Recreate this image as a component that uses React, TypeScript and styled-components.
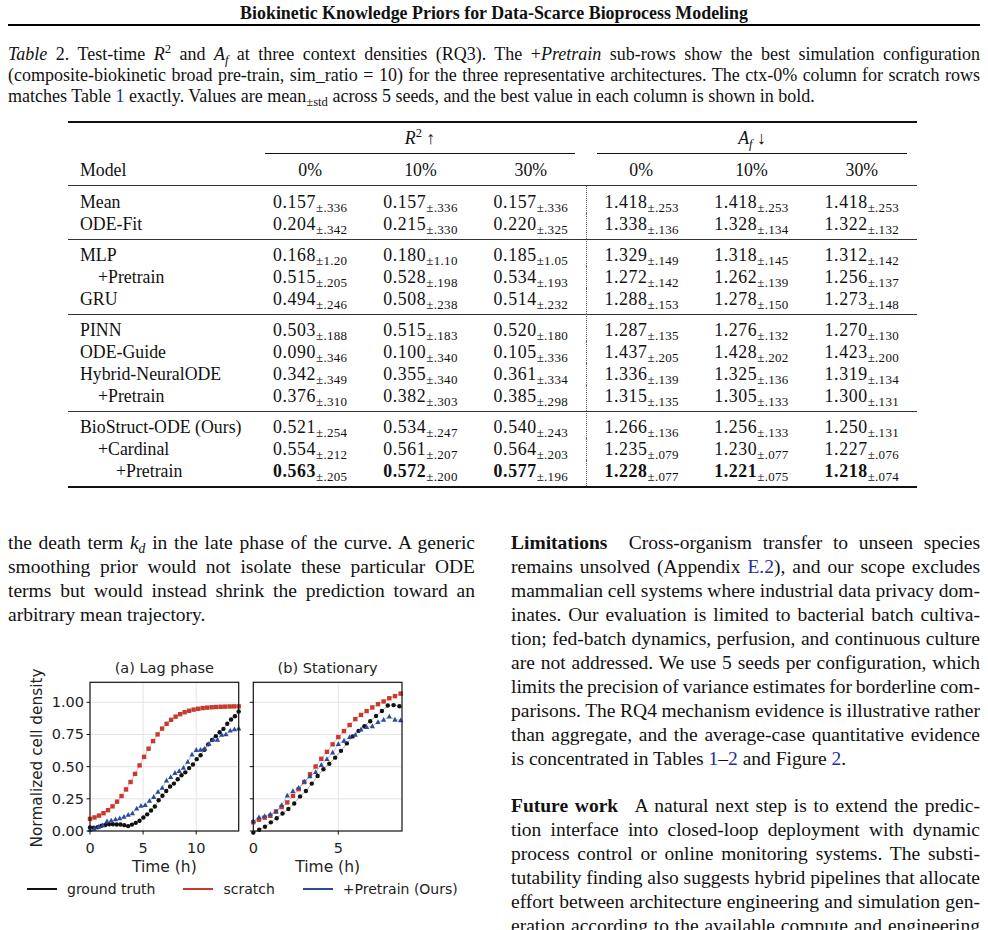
import React from "react";
import styled, { createGlobalStyle } from "styled-components";

const GlobalStyle = createGlobalStyle`
  html, body { margin: 0; padding: 0; background: #fff; }
  body { font-family: "Liberation Serif", "Times New Roman", serif; color: #111; }
  * { box-sizing: border-box; }
`;

const Page = styled.div`
  width: 988px;
  height: 930px;
  overflow: hidden;
  padding: 0 8px;
`;

const RunningHead = styled.header`
  height: 26px;
  padding-top: 3px;
  border-bottom: 2px solid #000;
  font-weight: bold;
  font-size: 17.9px;
  line-height: 20px;
  text-align: center;
`;

const Caption = styled.div`
  margin-top: 18px;
  font-size: 18px;
  line-height: 21px;
`;

const Line = styled.span<{ $last?: boolean }>`
  display: block;
  text-align: justify;
  text-align-last: ${(p) => (p.$last ? "left" : "justify")};
  word-spacing: ${(p) => (p.$last ? "0" : "-2px")};
  white-space: normal;
`;

const Label = styled.i``;
const MathI = styled.i`
  font-style: italic;
`;
const Sup = styled.sup`
  font-size: 0.7em;
  line-height: 0;
  vertical-align: 0.55em;
  font-style: normal;
`;
const Sub = styled.sub`
  font-size: 0.7em;
  line-height: 0;
  vertical-align: -0.3em;
`;
const Link = styled.span`
  color: #1f2f9a;
`;
const Bold = styled.b`
  font-weight: bold;
  margin-right: 0.55em;
`;

/* ---------------- Table ---------------- */

const Table = styled.table`
  margin: 14px 0 0 60px;
  width: 849px;
  border-collapse: separate;
  border-spacing: 0;
  font-size: 17.8px;
  line-height: 22px;
  border-top: 2px solid #111;
  border-bottom: 2px solid #111;
  table-layout: fixed;
`;

const GroupTh = styled.th`
  padding: 4px 0 0 0;
  font-weight: normal;
`;

const GroupHead = styled.div<{ $l: number; $r: number }>`
  margin: 0 ${(p) => p.$r}px 0 ${(p) => p.$l}px;
  padding-bottom: 4px;
  border-bottom: 1px solid #111;
  text-align: center;
  line-height: 22px;
`;

const HeadTh = styled.th<{ $left?: boolean }>`
  font-weight: normal;
  padding: 5px 0 4px ${(p) => (p.$left ? "12px" : "0")};
  text-align: ${(p) => (p.$left ? "left" : "center")};
  border-bottom: 1px solid #333;
`;

const Cell = styled.td<{ $first?: boolean; $lastRow?: boolean; $dotted?: boolean; $groupTop?: boolean }>`
  text-align: center;
  white-space: nowrap;
  padding: ${(p) => (p.$first ? (p.$groupTop ? "4px" : "5px") : "0")} 0 ${(p) => (p.$lastRow ? "4px" : "0")} 0;
  border-left: ${(p) => (p.$dotted ? "1px dotted #666" : "none")};
  border-top: ${(p) => (p.$groupTop ? "1px solid #333" : "none")};
`;

const NameCell = styled(Cell)<{ $indent: number }>`
  text-align: left;
  padding-left: ${(p) => 12 + p.$indent * 18}px;
`;

const Val = styled.span<{ $bold?: boolean }>`
  font-weight: ${(p) => (p.$bold ? 700 : 400)};
  letter-spacing: 0.6px;
`;
const Std = styled.span`
  font-size: 13px;
  vertical-align: -4px;
  line-height: 0;
  letter-spacing: 0.3px;
`;

type Row = { name: string; indent: number; bold?: boolean; v: [string, string][] };

const groups: Row[][] = [
  [
    { name: "Mean", indent: 0, v: [["0.157", ".336"], ["0.157", ".336"], ["0.157", ".336"], ["1.418", ".253"], ["1.418", ".253"], ["1.418", ".253"]] },
    { name: "ODE-Fit", indent: 0, v: [["0.204", ".342"], ["0.215", ".330"], ["0.220", ".325"], ["1.338", ".136"], ["1.328", ".134"], ["1.322", ".132"]] },
  ],
  [
    { name: "MLP", indent: 0, v: [["0.168", "1.20"], ["0.180", "1.10"], ["0.185", "1.05"], ["1.329", ".149"], ["1.318", ".145"], ["1.312", ".142"]] },
    { name: "+Pretrain", indent: 1, v: [["0.515", ".205"], ["0.528", ".198"], ["0.534", ".193"], ["1.272", ".142"], ["1.262", ".139"], ["1.256", ".137"]] },
    { name: "GRU", indent: 0, v: [["0.494", ".246"], ["0.508", ".238"], ["0.514", ".232"], ["1.288", ".153"], ["1.278", ".150"], ["1.273", ".148"]] },
  ],
  [
    { name: "PINN", indent: 0, v: [["0.503", ".188"], ["0.515", ".183"], ["0.520", ".180"], ["1.287", ".135"], ["1.276", ".132"], ["1.270", ".130"]] },
    { name: "ODE-Guide", indent: 0, v: [["0.090", ".346"], ["0.100", ".340"], ["0.105", ".336"], ["1.437", ".205"], ["1.428", ".202"], ["1.423", ".200"]] },
    { name: "Hybrid-NeuralODE", indent: 0, v: [["0.342", ".349"], ["0.355", ".340"], ["0.361", ".334"], ["1.336", ".139"], ["1.325", ".136"], ["1.319", ".134"]] },
    { name: "+Pretrain", indent: 1, v: [["0.376", ".310"], ["0.382", ".303"], ["0.385", ".298"], ["1.315", ".135"], ["1.305", ".133"], ["1.300", ".131"]] },
  ],
  [
    { name: "BioStruct-ODE (Ours)", indent: 0, v: [["0.521", ".254"], ["0.534", ".247"], ["0.540", ".243"], ["1.266", ".136"], ["1.256", ".133"], ["1.250", ".131"]] },
    { name: "+Cardinal", indent: 1, v: [["0.554", ".212"], ["0.561", ".207"], ["0.564", ".203"], ["1.235", ".079"], ["1.230", ".077"], ["1.227", ".076"]] },
    { name: "+Pretrain", indent: 2, bold: true, v: [["0.563", ".205"], ["0.572", ".200"], ["0.577", ".196"], ["1.228", ".077"], ["1.221", ".075"], ["1.218", ".074"]] },
  ],
];

function ResultsTable() {
  return (
    <Table>
      <colgroup>
        <col style={{ width: 187 }} />
        {[0, 1, 2, 3, 4, 5].map((i) => (
          <col key={i} />
        ))}
      </colgroup>
      <thead>
        <tr>
          <GroupTh />
          <GroupTh colSpan={3}>
            <GroupHead $l={10} $r={11}>
              <MathI>R</MathI>
              <Sup>2</Sup> ↑
            </GroupHead>
          </GroupTh>
          <GroupTh colSpan={3}>
            <GroupHead $l={11} $r={10}>
              <MathI>A</MathI>
              <Sub>
                <MathI>f</MathI>
              </Sub>{" "}
              ↓
            </GroupHead>
          </GroupTh>
        </tr>
        <tr>
          <HeadTh $left>Model</HeadTh>
          {["0%", "10%", "30%", "0%", "10%", "30%"].map((h, i) => (
            <HeadTh key={i}>{h}</HeadTh>
          ))}
        </tr>
      </thead>
      {groups.map((g, gi) => (
        <tbody key={gi}>
          {g.map((r, ri) => {
            const first = ri === 0;
            const lastRow = ri === g.length - 1;
            const gt = first && gi > 0;
            return (
              <tr key={ri}>
                <NameCell $indent={r.indent} $first={first} $lastRow={lastRow} $groupTop={gt}>
                  {r.name}
                </NameCell>
                {r.v.map(([m, s], ci) => (
                  <Cell key={ci} $first={first} $lastRow={lastRow} $groupTop={gt} $dotted={ci === 3}>
                    <Val $bold={r.bold}>{m}</Val>
                    <Std>±{s}</Std>
                  </Cell>
                ))}
              </tr>
            );
          })}
        </tbody>
      ))}
    </Table>
  );
}

/* ---------------- Body columns ---------------- */

const Columns = styled.div`
  margin-top: 43px;
  display: grid;
  grid-template-columns: 467px 469px;
  column-gap: 36px;
  align-items: start;
`;

const Column = styled.div`
  display: flex;
  flex-direction: column;
`;

const Para = styled.p<{ $gap?: number }>`
  margin: ${(p) => p.$gap ?? 0}px 0 0 0;
  font-size: 19.5px;
  line-height: 24px;
`;

/* ---------------- Figure ---------------- */

const FigureBox = styled.figure`
  margin: 23px 0 0 0;
  display: flex;
  flex-direction: column;
`;

const Legend = styled.div`
  display: flex;
  align-items: center;
  gap: 28px;
  padding-left: 19px;
  height: 18px;
  font-family: "DejaVu Sans", sans-serif;
  font-size: 14px;
  color: #222;
`;

const LegendItem = styled.div`
  display: flex;
  align-items: center;
  gap: 10px;
`;

const Swatch = styled.span<{ $c: string }>`
  display: inline-block;
  width: 30px;
  height: 2.5px;
  background: ${(p) => p.$c};
`;

const FigCaption = styled.div`
  margin-top: 31px;
  font-size: 18px;
  line-height: 21px;
  padding-left: 44px;
`;

type P = [number, number];
const interp = (k: P[], t: number) => {
  if (t <= k[0][0]) return k[0][1];
  for (let i = 1; i < k.length; i++) {
    if (t <= k[i][0]) {
      const [t0, v0] = k[i - 1];
      const [t1, v1] = k[i];
      return v0 + ((v1 - v0) * (t - t0)) / (t1 - t0);
    }
  }
  return k[k.length - 1][1];
};
const jit = (i: number, s: number) => {
  const x = Math.sin(i * 12.9898 + s * 78.233) * 43758.5453;
  return x - Math.floor(x) - 0.5;
};

const RED = "#c9392e";
const BLUE = "#2b4a9e";
const BLK = "#111";

const aBlack: P[] = [[0, 0.03], [0.5, 0.02], [1, 0.04], [1.5, 0.05], [2, 0.05], [2.5, 0.05], [3, 0.05], [3.5, 0.04], [4, 0.05], [4.5, 0.07], [5, 0.1], [5.5, 0.14], [6, 0.18], [6.5, 0.24], [7, 0.29], [7.5, 0.34], [8, 0.38], [8.5, 0.42], [9, 0.46], [9.5, 0.5], [10, 0.55], [10.5, 0.6], [11, 0.66], [11.5, 0.71], [12, 0.75], [12.5, 0.79], [13, 0.84], [13.5, 0.88], [14, 0.93]];
const aBlue: P[] = [[0, 0.02], [1, 0.04], [2, 0.08], [3, 0.1], [3.5, 0.12], [4, 0.14], [4.5, 0.17], [5, 0.2], [5.5, 0.22], [6, 0.26], [6.5, 0.3], [7, 0.36], [7.5, 0.41], [8, 0.45], [8.5, 0.47], [9, 0.52], [9.5, 0.59], [10, 0.62], [10.5, 0.63], [11, 0.66], [11.5, 0.7], [12, 0.72], [12.5, 0.75], [13, 0.77], [13.5, 0.8], [14, 0.79]];
const bRed: P[] = [[0, 0.07], [1, 0.12], [2, 0.22], [3, 0.38], [4, 0.56], [5, 0.73], [6, 0.87], [7, 0.96], [8, 1.03], [8.75, 1.07]];
const bBlack: P[] = [[0, -0.01], [0.5, 0.02], [1, 0.06], [2, 0.16], [3, 0.3], [4, 0.46], [5, 0.6], [6, 0.76], [7, 0.87], [7.5, 0.92], [8, 0.99], [8.3, 0.98], [8.75, 0.97]];
const bBlue: P[] = [[0, 0.09], [0.5, 0.13], [1, 0.12], [1.5, 0.18], [2, 0.27], [2.5, 0.31], [3, 0.37], [4, 0.5], [5, 0.67], [6, 0.76], [7, 0.81], [7.5, 0.85], [8, 0.88], [8.4, 0.85], [8.75, 0.87]];

const Y0 = 181;
const YS = 128.7;
const yOf = (v: number) => Y0 - v * YS;

type Series = { pts: P[]; color: string; kind: "sq" | "dot" | "tri" };

function Marker({ x, y, kind, color }: { x: number; y: number; kind: Series["kind"]; color: string }) {
  if (kind === "sq") return <rect x={x - 2.2} y={y - 2.2} width={4.4} height={4.4} fill={color} />;
  if (kind === "dot") return <circle cx={x} cy={y} r={2.2} fill={color} />;
  return <polygon points={`${x},${y - 2.9} ${x - 2.6},${y + 1.9} ${x + 2.6},${y + 1.9}`} fill={color} />;
}

function Panel({
  x0,
  x1,
  tmax,
  xticks,
  title,
  showY,
  series,
}: {
  x0: number;
  x1: number;
  tmax: number;
  xticks: number[];
  title: string;
  showY: boolean;
  series: Series[];
}) {
  const xOf = (t: number) => x0 + ((x1 - x0) * t) / tmax;
  const yt = [0, 0.25, 0.5, 0.75, 1];
  const top = 32.3;
  return (
    <g>
      {xticks.filter((t) => t > 0).map((t) => (
        <line key={"gx" + t} x1={xOf(t)} x2={xOf(t)} y1={top} y2={Y0} stroke="#e4e4e4" strokeWidth={1} />
      ))}
      {yt.filter((v) => v > 0).map((v) => (
        <line key={"gy" + v} x1={x0} x2={x1} y1={yOf(v)} y2={yOf(v)} stroke="#e4e4e4" strokeWidth={1} />
      ))}
      {series.map((s, si) => {
        const poly = s.pts.map(([t, v]) => `${xOf(t)},${yOf(v)}`).join(" ");
        return (
          <g key={si}>
            <polyline points={poly} fill="none" stroke={s.color} strokeOpacity={0.35} strokeWidth={1} />
            {s.pts.map(([t, v], i) => (
              <Marker key={i} x={xOf(t)} y={yOf(v)} kind={s.kind} color={s.color} />
            ))}
          </g>
        );
      })}
      <rect x={x0} y={top} width={x1 - x0} height={Y0 - top} fill="none" stroke="#111" strokeWidth={1.2} />
      {yt.map((v) => (
        <line key={"ty" + v} x1={x0 - 3.5} x2={x0} y1={yOf(v)} y2={yOf(v)} stroke="#111" strokeWidth={1} />
      ))}
      {xticks.map((t) => (
        <line key={"tx" + t} x1={xOf(t)} x2={xOf(t)} y1={Y0} y2={Y0 + 3.5} stroke="#111" strokeWidth={1} />
      ))}
      {showY &&
        yt.map((v) => (
          <text key={"ly" + v} x={x0 - 6} y={yOf(v) + 5} textAnchor="end" fontSize={14.5} fill="#222">
            {v.toFixed(2)}
          </text>
        ))}
      {xticks.map((t) => (
        <text key={"lx" + t} x={xOf(t)} y={203} textAnchor="middle" fontSize={14.5} fill="#222">
          {t}
        </text>
      ))}
      <text x={(x0 + x1) / 2} y={23} textAnchor="middle" fontSize={14.5} fill="#222">
        {title}
      </text>
      <text x={(x0 + x1) / 2} y={222} textAnchor="middle" fontSize={15.5} fill="#222">
        Time (h)
      </text>
    </g>
  );
}

function sample(k: P[], n: number, tmax: number, seed: number, amp: number): P[] {
  const out: P[] = [];
  for (let i = 0; i < n; i++) {
    const t = (tmax * i) / (n - 1);
    out.push([t, interp(k, t) + jit(i, seed) * amp]);
  }
  return out;
}

function GrowthFigure() {
  const aRedPts: P[] = [];
  for (let i = 0; i < 34; i++) {
    const t = (14 * i) / 33;
    aRedPts.push([t, 0.06 + 0.91 / (1 + Math.exp(-(t - 4.7) / 1.45))]);
  }
  const aSeries: Series[] = [
    { pts: sample(aBlack, 40, 14, 1, 0.008), color: BLK, kind: "dot" },
    { pts: aRedPts, color: RED, kind: "sq" },
    { pts: sample(aBlue, 36, 14, 2, 0.025), color: BLUE, kind: "tri" },
  ];
  const bSeries: Series[] = [
    { pts: sample(bBlack, 26, 8.6, 3, 0.01), color: BLK, kind: "dot" },
    { pts: sample(bRed, 27, 8.67, 4, 0.004), color: RED, kind: "sq" },
    { pts: sample(bBlue, 27, 8.67, 5, 0.03), color: BLUE, kind: "tri" },
  ];
  return (
    <FigureBox>
      <svg width={467} height={230} viewBox="0 0 467 230" style={{ display: "block" }} fontFamily="DejaVu Sans, sans-serif">
        <text transform="translate(29,108) rotate(-90)" textAnchor="middle" dy="0.35em" fontSize={15.3} fill="#222">
          Normalized cell density
        </text>
        <Panel x0={82} x1={230.7} tmax={14} xticks={[0, 5, 10]} title="(a) Lag phase" showY series={aSeries} />
        <Panel x0={245.3} x1={394} tmax={8.75} xticks={[0, 5]} title="(b) Stationary" showY={false} series={bSeries} />
      </svg>
      <Legend>
        <LegendItem>
          <Swatch $c={BLK} />
          ground truth
        </LegendItem>
        <LegendItem>
          <Swatch $c={RED} />
          scratch
        </LegendItem>
        <LegendItem>
          <Swatch $c={BLUE} />
          +Pretrain (Ours)
        </LegendItem>
      </Legend>
    </FigureBox>
  );
}

export default function App() {
  return (
    <>
      <GlobalStyle />
      <Page>
        <RunningHead>Biokinetic Knowledge Priors for Data-Scarce Bioprocess Modeling</RunningHead>
        <Caption>
          <Line>
            <Label>Table</Label> 2. Test-time <MathI>R</MathI>
            <Sup>2</Sup> and <MathI>A</MathI>
            <Sub>
              <MathI>f</MathI>
            </Sub>{" "}
            at three context densities (RQ3). The +<Label>Pretrain</Label> sub-rows show the best simulation configuration
          </Line>
          <Line>
            (composite-biokinetic broad pre-train, sim_ratio = 10) for the three representative architectures. The ctx-0% column for scratch rows
          </Line>
          <Line $last>
            matches Table <Link>1</Link> exactly. Values are mean<Sub>±std</Sub> across 5 seeds, and the best value in each column is shown in bold.
          </Line>
        </Caption>
        <ResultsTable />
        <Columns>
          <Column>
            <Para>
              <Line>
                the death term <MathI>k</MathI>
                <Sub>
                  <MathI>d</MathI>
                </Sub>{" "}
                in the late phase of the curve. A generic
              </Line>
              <Line>smoothing prior would not isolate these particular ODE</Line>
              <Line>terms but would instead shrink the prediction toward an</Line>
              <Line $last>arbitrary mean trajectory.</Line>
            </Para>
            <GrowthFigure />
            <FigCaption>
              <Line $last>
                <Label>Figure 3.</Label> Mechanism case studies on two held-out batch curves.
              </Line>
            </FigCaption>
          </Column>
          <Column>
            <Para>
              <Line>
                <Bold>Limitations</Bold> Cross-organism transfer to unseen species
              </Line>
              <Line>
                remains unsolved (Appendix <Link>E.2</Link>), and our scope excludes
              </Line>
              <Line>mammalian cell systems where industrial data privacy dom-</Line>
              <Line>inates. Our evaluation is limited to bacterial batch cultiva-</Line>
              <Line>tion; fed-batch dynamics, perfusion, and continuous culture</Line>
              <Line>are not addressed. We use 5 seeds per configuration, which</Line>
              <Line>limits the precision of variance estimates for borderline com-</Line>
              <Line>parisons. The RQ4 mechanism evidence is illustrative rather</Line>
              <Line>than aggregate, and the average-case quantitative evidence</Line>
              <Line $last>
                is concentrated in Tables <Link>1</Link>–<Link>2</Link> and Figure <Link>2</Link>.
              </Line>
            </Para>
            <Para $gap={23}>
              <Line>
                <Bold>Future work</Bold> A natural next step is to extend the predic-
              </Line>
              <Line>tion interface into closed-loop deployment with dynamic</Line>
              <Line>process control or online monitoring systems. The substi-</Line>
              <Line>tutability finding also suggests hybrid pipelines that allocate</Line>
              <Line>effort between architecture engineering and simulation gen-</Line>
              <Line>eration according to the available compute and engineering</Line>
            </Para>
          </Column>
        </Columns>
      </Page>
    </>
  );
}
